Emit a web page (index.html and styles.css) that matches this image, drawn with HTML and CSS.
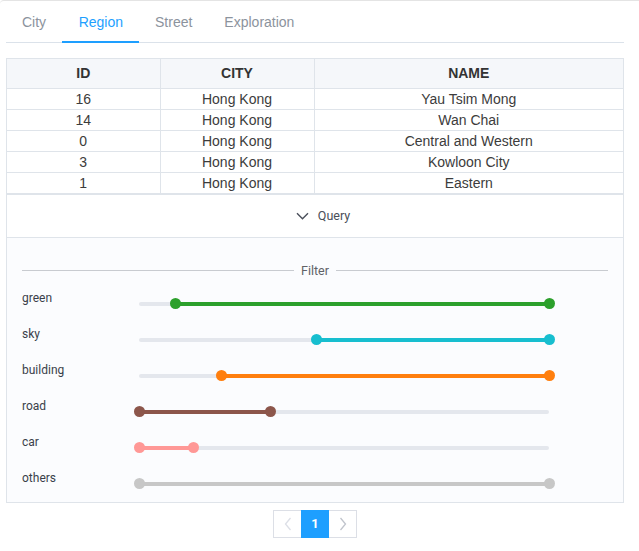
FILE: index.html
```html
<!DOCTYPE html>
<html>
<head>
<meta charset="utf-8">
<link rel="stylesheet" href="styles.css">
</head>
<body>
<div class="card">
  <div class="tabs">
    <div class="tab">City</div>
    <div class="tab active">Region</div>
    <div class="tab">Street</div>
    <div class="tab">Exploration</div>
  </div>
  <div class="panel">
    <table class="grid">
      <colgroup><col class="c1"><col class="c2"><col></colgroup>
      <thead><tr><th>ID</th><th>CITY</th><th>NAME</th></tr></thead>
      <tbody>
        <tr><td>16</td><td>Hong Kong</td><td>Yau Tsim Mong</td></tr>
        <tr><td>14</td><td>Hong Kong</td><td>Wan Chai</td></tr>
        <tr><td>0</td><td>Hong Kong</td><td>Central and Western</td></tr>
        <tr><td>3</td><td>Hong Kong</td><td>Kowloon City</td></tr>
        <tr><td>1</td><td>Hong Kong</td><td>Eastern</td></tr>
      </tbody>
    </table>
    <div class="query">
      <svg width="13" height="8" viewBox="0 0 13 8"><path d="M1 1.2 L6.5 6.7 L12 1.2" fill="none" stroke="#4a4f5a" stroke-width="1.4"/></svg>
      <span>Query</span>
    </div>
    <div class="filter">
      <div class="divider"><span>Filter</span></div>
      <div class="rows">
        <div class="row"><span class="lbl">green</span><div class="track"><div class="fill" style="left:9%;width:91%;background:#2ca02c"></div><i style="left:9%;background:#2ca02c"></i><i style="left:100%;background:#2ca02c"></i></div></div>
        <div class="row"><span class="lbl">sky</span><div class="track"><div class="fill" style="left:43.2%;width:56.8%;background:#17becf"></div><i style="left:43.2%;background:#17becf"></i><i style="left:100%;background:#17becf"></i></div></div>
        <div class="row"><span class="lbl">building</span><div class="track"><div class="fill" style="left:20%;width:80%;background:#ff7f0e"></div><i style="left:20%;background:#ff7f0e"></i><i style="left:100%;background:#ff7f0e"></i></div></div>
        <div class="row"><span class="lbl">road</span><div class="track"><div class="fill" style="left:0;width:32%;background:#8c564b"></div><i style="left:0;background:#8c564b"></i><i style="left:32%;background:#8c564b"></i></div></div>
        <div class="row"><span class="lbl">car</span><div class="track"><div class="fill" style="left:0;width:13.2%;background:#ff9896"></div><i style="left:0;background:#ff9896"></i><i style="left:13.2%;background:#ff9896"></i></div></div>
        <div class="row"><span class="lbl">others</span><div class="track"><div class="fill" style="left:0;width:100%;background:#c7c7c7"></div><i style="left:0;background:#c7c7c7"></i><i style="left:100%;background:#c7c7c7"></i></div></div>
      </div>
    </div>
  </div>
  <div class="pager">
    <div class="pbtn"><svg width="8" height="14" viewBox="0 0 8 14"><path d="M6.5 1 L1.5 7 L6.5 13" fill="none" stroke="#dcdfe6" stroke-width="1.3"/></svg></div>
    <div class="pbtn cur">1</div>
    <div class="pbtn"><svg width="8" height="14" viewBox="0 0 8 14"><path d="M1.5 1 L6.5 7 L1.5 13" fill="none" stroke="#c0c4cc" stroke-width="1.3"/></svg></div>
  </div>
</div>
</body>
</html>
```
FILE: styles.css
```css
* { box-sizing: border-box; }
body { margin: 0; background: #fff; font-family: "Liberation Sans", Arial, sans-serif; }
.card {
  width: 660px;
  border-top: 1px solid #e4e4e4;
  border-top-left-radius: 4px;
  padding: 0 0 0 6px;
  height: 551px;
}
.tabs {
  display: flex;
  width: 618px;
  height: 42px;
  border-bottom: 1px solid #dbe2ea;
  padding-left: 16px;
}
.tab {
  padding: 13px 0 0;
  font-size: 14px;
  color: #8c939d;
  height: 42px;
  line-height: 16px;
}
.tab:nth-child(1) { margin-right: 31.5px; }
.tab:nth-child(3) { margin-right: 32px; }
.tab.active {
  color: #1e9fff;
  border-bottom: 2px solid #1e9fff;
  padding-left: 17px;
  padding-right: 16px;
  margin-left: -16px;
  margin-right: 16px;
  height: 42px;
}
.panel {
  width: 618px;
  margin-top: 15px;
  border: 1px solid #dfe4ea;
}
.grid {
  width: 100%;
  border-collapse: collapse;
  font-size: 14px;
  color: #3c3c3c;
}
.c1 { width: 153px; }
.c2 { width: 154px; }
.grid th {
  height: 29px;
  background: #f5f7fa;
  font-weight: bold;
  color: #333;
  border-right: 1px solid #dfe4ea;
  border-bottom: 1px solid #dfe4ea;
  padding: 0;
}
.grid td {
  height: 21px;
  padding: 0;
  text-align: center;
  border-right: 1px solid #dfe4ea;
  border-bottom: 1px solid #dfe4ea;
  line-height: 20px;
}
.grid th:last-child, .grid td:last-child { border-right: none; }
.grid tbody tr:last-child td { border-bottom: 2px solid #dfe4ea; }
.query {
  height: 43px;
  display: flex;
  align-items: center;
  justify-content: center;
  gap: 9px;
  border-bottom: 1px solid #dfe4ea;
  font-family: Roboto, sans-serif;
  font-size: 12.5px;
  color: #4a4f5a;
  padding-left: 16px;
}
.filter {
  background: #fbfcfe;
  padding: 23px 15px 0;
  height: 264px;
}
.divider {
  display: flex;
  align-items: center;
  height: 20px;
  font-family: Roboto, sans-serif;
  font-size: 12.5px;
  color: #606266;
}
.divider::before, .divider::after {
  content: "";
  flex: 1;
  height: 1px;
  background: #c8cbd0;
}
.divider span { padding: 0 7px; }
.rows { margin-top: 9px; display: flex; flex-direction: column; }
.row { height: 36px; display: flex; }
.lbl {
  width: 117px;
  font-family: Roboto, sans-serif;
  font-size: 12px;
  color: #3a3f4a;
  line-height: 16px;
}
.track {
  position: relative;
  width: 410px;
  height: 4px;
  margin-top: 12px;
  background: #e4e7ed;
  border-radius: 2px;
}
.fill { position: absolute; top: 0; height: 4px; }
.track i {
  position: absolute;
  top: -3.5px;
  width: 11px;
  height: 11px;
  margin-left: -5.5px;
  border-radius: 50%;
}
.pager {
  display: flex;
  width: 618px;
  justify-content: center;
  margin-top: 7px;
}
.pbtn {
  width: 28px;
  height: 28px;
  border-top: 1px solid #dcdfe6;
  border-bottom: 1px solid #dcdfe6;
  display: flex;
  align-items: center;
  justify-content: center;
  font-family: Roboto, sans-serif;
  font-size: 13px;
  font-weight: bold;
}
.pbtn:first-child { border-left: 1px solid #dcdfe6; }
.pbtn:last-child { border-right: 1px solid #dcdfe6; }
.pbtn.cur { background: #1e9fff; color: #fff; border-color: #1e9fff; }
```
